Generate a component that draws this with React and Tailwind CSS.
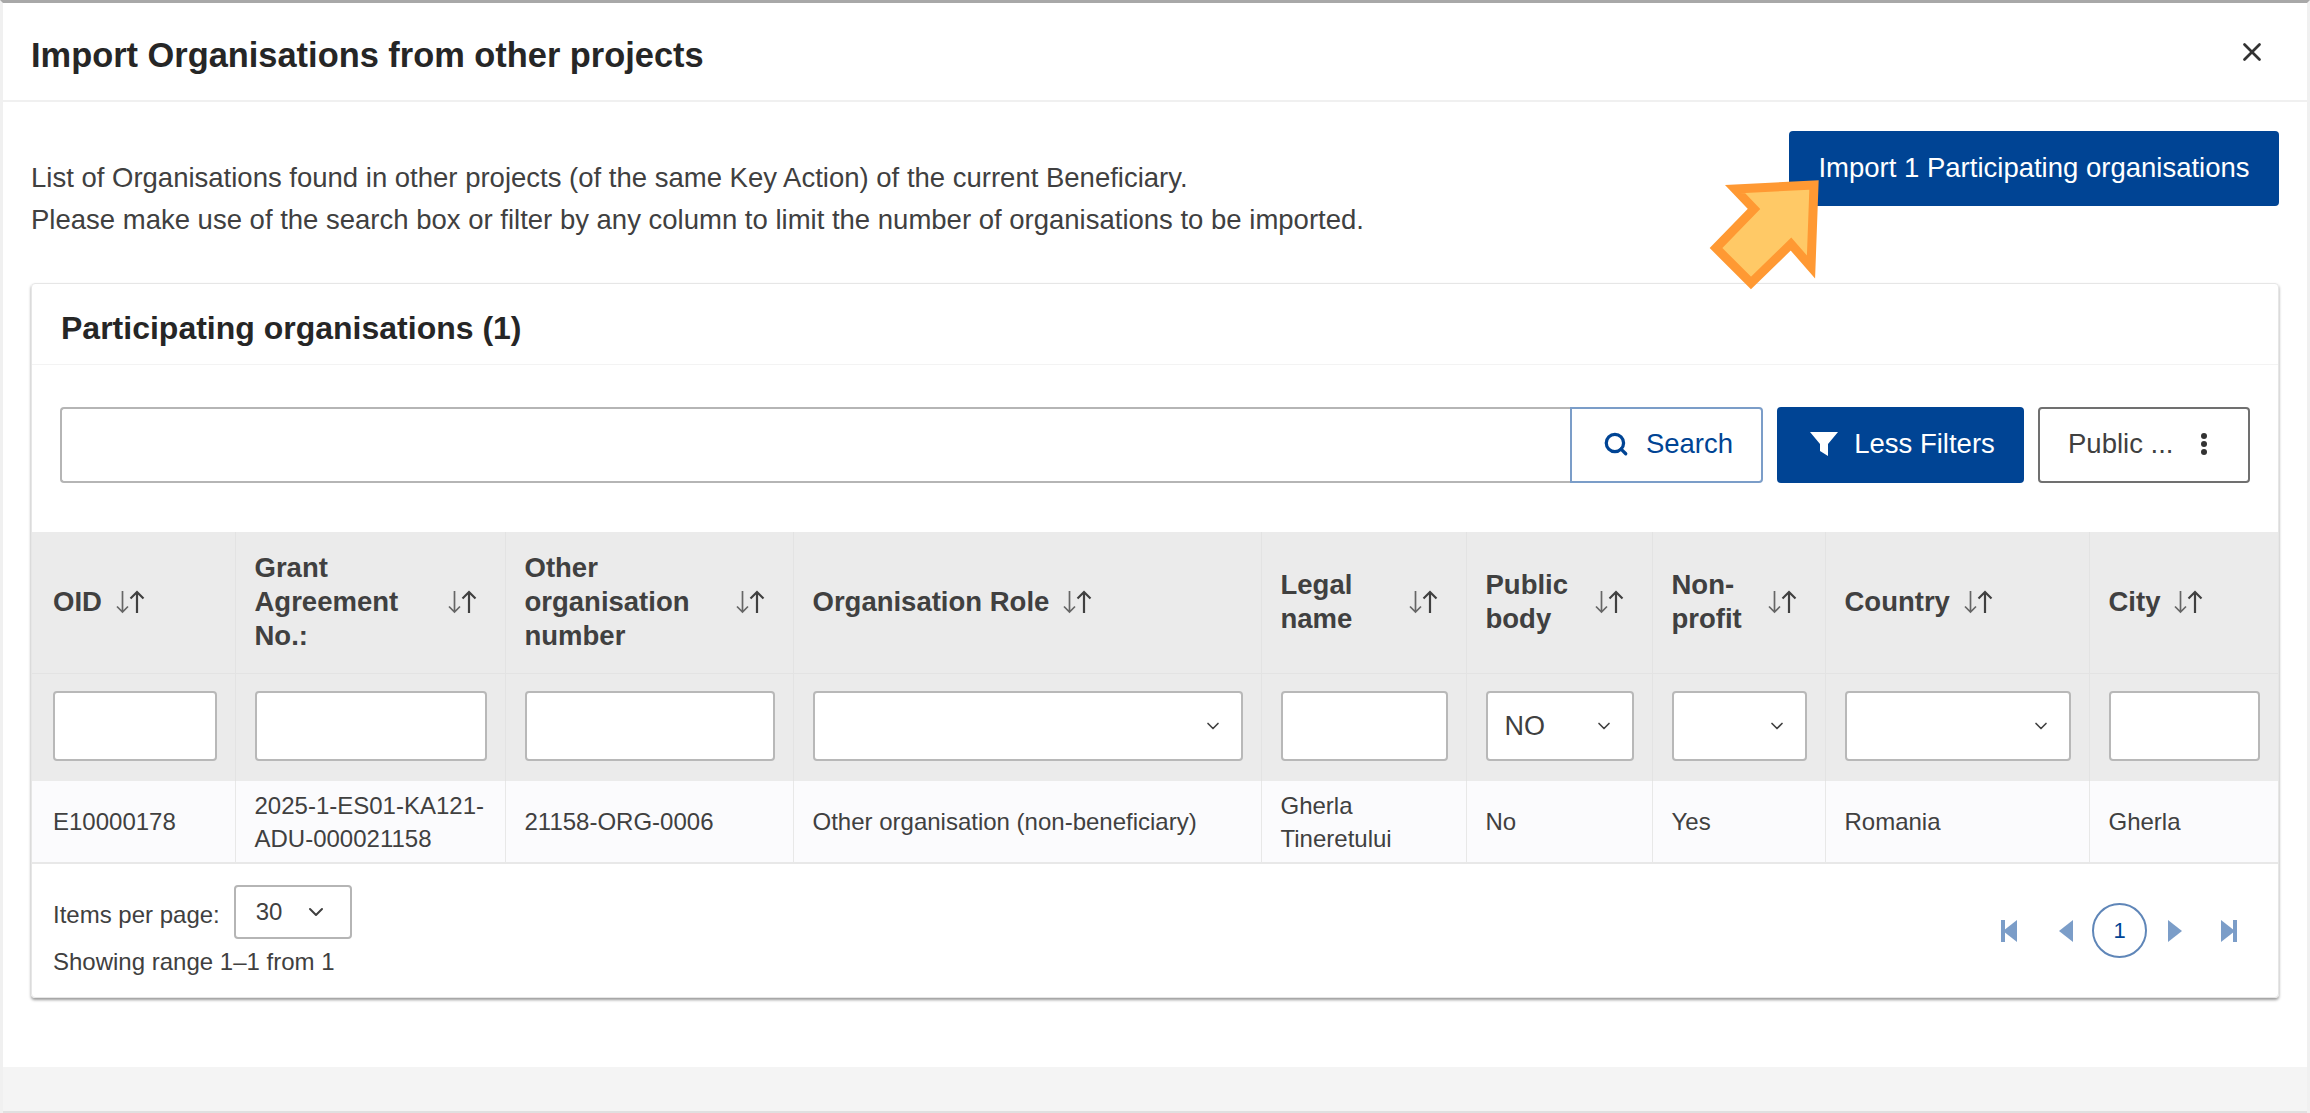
import React from 'react';
import { Search, X, ChevronDown } from 'lucide-react';

const SortIcon = () => (
  <svg width="30" height="26" viewBox="0 0 30 26" fill="none" className="shrink-0">
    <path d="M6.5 2v21M1 17.5l5.5 5.5 5.5-5.5" stroke="#666666" strokeWidth="1.7" />
    <path d="M21 24V3M14.5 9.5L21 3l6.5 6.5" stroke="#404040" strokeWidth="2.2" />
  </svg>
);

const Filter = ({ select, value }) => (
  <div className="flex h-[70px] w-full items-center justify-between rounded-[4px] border-2 border-[#b8b8b8] bg-white pl-[17px] pr-[18px] text-[27px] text-[#404040]">
    <span>{value}</span>
    {select && <ChevronDown size={20} strokeWidth={2} className="text-[#404040]" />}
  </div>
);

const columns = [
  { width: 203, label: ['OID'] },
  { width: 270, label: ['Grant', 'Agreement', 'No.:'] },
  { width: 288, label: ['Other', 'organisation', 'number'] },
  { width: 468, label: ['Organisation Role'], select: true },
  { width: 205, label: ['Legal', 'name'] },
  { width: 186, label: ['Public', 'body'], select: true, value: 'NO' },
  { width: 173, label: ['Non-', 'profit'], select: true },
  { width: 264, label: ['Country'], select: true },
  { width: 189, label: ['City'] },
];

const row = [
  ['E10000178'],
  ['2025-1-ES01-KA121-', 'ADU-000021158'],
  ['21158-ORG-0006'],
  ['Other organisation (non-beneficiary)'],
  ['Gherla', 'Tineretului'],
  ['No'],
  ['Yes'],
  ['Romania'],
  ['Gherla'],
];

const PagerTriangle = ({ dir, bar }) => (
  <svg width="16" height="22" viewBox="0 0 16 22" fill="#7b9dc8">
    {dir === 'left' ? <path d="M16 0v22L2 11z" /> : <path d="M0 0v22l14-11z" />}
    {bar && <rect x={dir === 'left' ? 0 : 12} width="4" height="22" />}
  </svg>
);

export default function App() {
  return (
    <div className="relative flex h-screen w-full flex-col overflow-hidden border-x-[3px] border-t-[3px] border-x-[#f0f0f0] border-t-[#a8a8a8] bg-white font-['Liberation_Sans',Arial,sans-serif] text-[#262626]">
      <div className="flex h-[99px] shrink-0 items-center justify-between border-b-2 border-[#f0f0f0] pl-[28px] pr-[40px]">
        <h1 className="pt-[9px] text-[34.4px] font-bold">Import Organisations from other projects</h1>
        <X size={30} strokeWidth={2.2} className="text-[#333333]" />
      </div>

      <div className="flex-1 px-[28px] pt-[29px]">
        <div className="mb-[42px] flex items-start justify-between">
          <div className="pt-[26px] text-[27.5px] leading-[42px] text-[#404040]">
            <p>List of Organisations found in other projects (of the same Key Action) of the current Beneficiary.</p>
            <p>Please make use of the search box or filter by any column to limit the number of organisations to be imported.</p>
          </div>
          <button className="h-[75px] w-[490px] rounded-[4px] bg-[#004494] pb-[2px] text-[27.5px] text-white">
            Import 1 Participating organisations
          </button>
        </div>

        <div className="rounded-[4px] border border-[#e6e6e6] shadow-[0_2px_3px_rgba(0,0,0,0.4)]">
          <div className="flex h-[81px] items-center border-b border-[#f3f3f3] pl-[29px]">
            <h2 className="pt-[7px] text-[32px] font-bold">Participating organisations (1)</h2>
          </div>

          <div className="flex gap-[14px] px-[28px] pb-[49px] pt-[42px]">
            <div className="flex h-[76px] flex-1">
              <input className="h-full flex-1 rounded-l-[4px] border-2 border-r-0 border-[#b5b5b5] bg-white" />
              <button className="flex w-[193px] items-center justify-center gap-[17px] rounded-r-[4px] border-2 border-[#7b9dc8] pb-[2px] pl-[3px] text-[27.5px] text-[#004494]">
                <Search size={26} strokeWidth={3} />
                Search
              </button>
            </div>
            <button className="flex w-[247px] items-center justify-center gap-[15px] rounded-[4px] bg-[#004494] pb-[2px] pl-[3px] text-[27.5px] text-white">
              <svg width="30" height="26" viewBox="0 0 30 26" fill="white">
                <path d="M1 1h28L19 13v12l-8-5V13z" />
              </svg>
              Less Filters
            </button>
            <button className="flex w-[212px] items-center justify-between rounded-[4px] border-2 border-[#707070] pb-[2px] pl-[28px] pr-[41px] text-[27.5px] text-[#404040]">
              Public ...
              <svg width="6" height="24" viewBox="0 0 6 24" fill="#333333">
                <circle cx="3" cy="4" r="3" />
                <circle cx="3" cy="12" r="3" />
                <circle cx="3" cy="20" r="3" />
              </svg>
            </button>
          </div>

          <table className="w-full table-fixed border-collapse">
            <colgroup>
              {columns.map((col, i) => (
                <col key={i} style={{ width: col.width }} />
              ))}
            </colgroup>
            <thead>
              <tr className="h-[141px] border-b border-[#e3e3e3] bg-[#ebebeb]">
                {columns.map((col, i) => (
                  <th
                    key={i}
                    className={`border-r border-[#e3e3e3] pr-[27px] text-left align-middle text-[27.5px] font-bold leading-[34px] text-[#404040] last:border-r-0 ${i === 0 ? 'pl-[21px]' : 'pl-[19px]'}`}
                  >
                    <div className={`flex items-center ${col.label.length > 1 ? 'justify-between' : 'gap-[14px]'}`}>
                      <span>
                        {col.label.map((line) => (
                          <span key={line} className="block">
                            {line}
                          </span>
                        ))}
                      </span>
                      <SortIcon />
                    </div>
                  </th>
                ))}
              </tr>
              <tr className="h-[108px] bg-[#ebebeb]">
                {columns.map((col, i) => (
                  <td key={i} className={`border-r border-[#e3e3e3] pb-[2px] pr-[18px] last:border-r-0 ${i === 0 ? 'pl-[21px]' : 'pl-[19px]'}`}>
                    <Filter select={col.select} value={col.value} />
                  </td>
                ))}
              </tr>
            </thead>
            <tbody>
              <tr className="h-[82px] border-b-2 border-[#e8e8e8] bg-[#fbfbfd]">
                {row.map((cell, i) => (
                  <td key={i} className={`border-r border-[#e8e8e8] pr-[10px] text-[24px] leading-[33px] text-[#404040] last:border-r-0 ${i === 0 ? 'pl-[21px]' : 'pl-[19px]'}`}>
                    {cell.map((line) => (
                      <span key={line} className="block whitespace-nowrap">
                        {line}
                      </span>
                    ))}
                  </td>
                ))}
              </tr>
            </tbody>
          </table>

          <div className="flex h-[133px] items-start justify-between pl-[21px] pr-[41px]">
            <div className="pt-[21px] text-[24px] text-[#404040]">
              <div className="flex items-center gap-[14px]">
                <span className="pt-[6px]">Items per page:</span>
                <div className="flex h-[54px] w-[118px] items-center justify-between rounded-[4px] border-2 border-[#b5b5b5] pl-[20px] pr-[22px]">
                  30
                  <ChevronDown size={24} strokeWidth={2} />
                </div>
              </div>
              <p className="mt-[5px]">Showing range 1–1 from 1</p>
            </div>
            <div className="flex items-center pt-[39px]">
              <PagerTriangle dir="left" bar />
              <span className="ml-[40px]"><PagerTriangle dir="left" /></span>
              <span className="ml-[19px] flex h-[55px] w-[55px] items-center justify-center rounded-full border-2 border-[#5f86b8] text-[22px] text-[#004494]">
                1
              </span>
              <span className="ml-[21px]"><PagerTriangle dir="right" /></span>
              <span className="ml-[37px]"><PagerTriangle dir="right" bar /></span>
            </div>
          </div>
        </div>
      </div>

      <div className="h-[46px] shrink-0 border-b-2 border-[#e0e0e0] bg-[#f4f4f4]" />

      <svg width="130" height="130" viewBox="0 0 130 130" className="absolute left-[1697px] top-[167px] overflow-visible">
        <path
          d="M114 15 L35 19 L54 39 L16 78 L51 113 L91 74 L111 97 Z"
          fill="#ffc966"
          stroke="#ff9933"
          strokeWidth="9"
        />
      </svg>
    </div>
  );
}
